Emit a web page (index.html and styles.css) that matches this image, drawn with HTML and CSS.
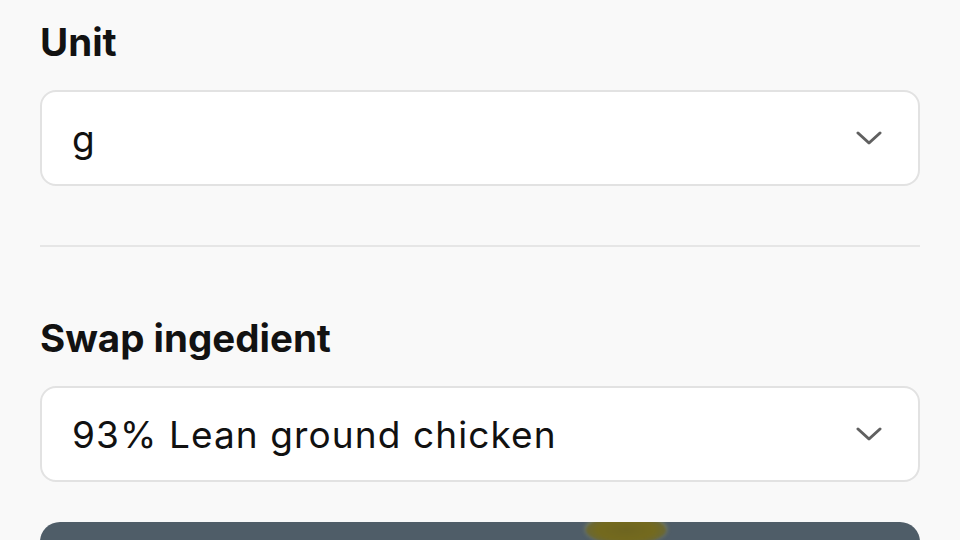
FILE: index.html
```html
<!DOCTYPE html>
<html lang="en">
<head>
<meta charset="utf-8">
<link rel="stylesheet" href="styles.css">
</head>
<body>
<main class="panel">
  <section class="field">
    <label class="field-label">Unit</label>
    <div class="select">
      <span class="select-value">g</span>
      <svg class="chevron" width="26" height="16" viewBox="0 0 26 16"><path d="M2 3 L13 13 L24 3" fill="none" stroke="#606060" stroke-width="3" stroke-linecap="round" stroke-linejoin="round"/></svg>
    </div>
  </section>
  <hr class="divider">
  <section class="field swap">
    <label class="field-label">Swap ingedient</label>
    <div class="select">
      <span class="select-value">93% Lean ground chicken</span>
      <svg class="chevron" width="26" height="16" viewBox="0 0 26 16"><path d="M2 3 L13 13 L24 3" fill="none" stroke="#606060" stroke-width="3" stroke-linecap="round" stroke-linejoin="round"/></svg>
    </div>
  </section>
  <button class="action"><span class="glow"></span></button>
</main>
</body>
</html>
```
FILE: styles.css
```css
html, body {
  margin: 0;
  padding: 0;
  background: #f9f9f9;
  overflow: hidden;
}
body {
  font-family: Inter, "Noto Sans", sans-serif;
  color: #111;
  width: 960px;
  height: 540px;
}
.panel {
  padding: 18px 40px 0 40px;
  display: flex;
  flex-direction: column;
}
.field {
  display: flex;
  flex-direction: column;
  gap: 24px;
}
.field-label {
  font-size: 38.5px;
  font-weight: 700;
  line-height: 48px;
  color: #121212;
}
.select {
  height: 92px;
  background: #fff;
  border: 2px solid #e2e2e2;
  border-radius: 16px;
  display: flex;
  align-items: center;
  justify-content: space-between;
  padding: 0 36px 0 30px;
}
.select-value {
  font-size: 37px;
  letter-spacing: 1.1px;
  color: #111;
}
.chevron {
  display: block;
}
.divider {
  border: none;
  height: 2px;
  background: #e6e6e6;
  margin: 59px 0 67px 0;
}
.action {
  position: relative;
  margin-top: 40px;
  height: 80px;
  border: none;
  border-radius: 20px;
  background: #4f5d68;
  overflow: hidden;
  padding: 0;
}
.glow {
  position: absolute;
  left: 546px;
  top: -6px;
  width: 80px;
  height: 28px;
  border-radius: 50%;
  background: radial-gradient(ellipse at center, #6e6520 0%, #746a1e 50%, rgba(120,110,30,0.6) 75%, rgba(120,110,30,0) 100%);
  box-shadow: 0 -1px 5px rgba(230,210,60,0.5);
  filter: blur(1px);
}
```
